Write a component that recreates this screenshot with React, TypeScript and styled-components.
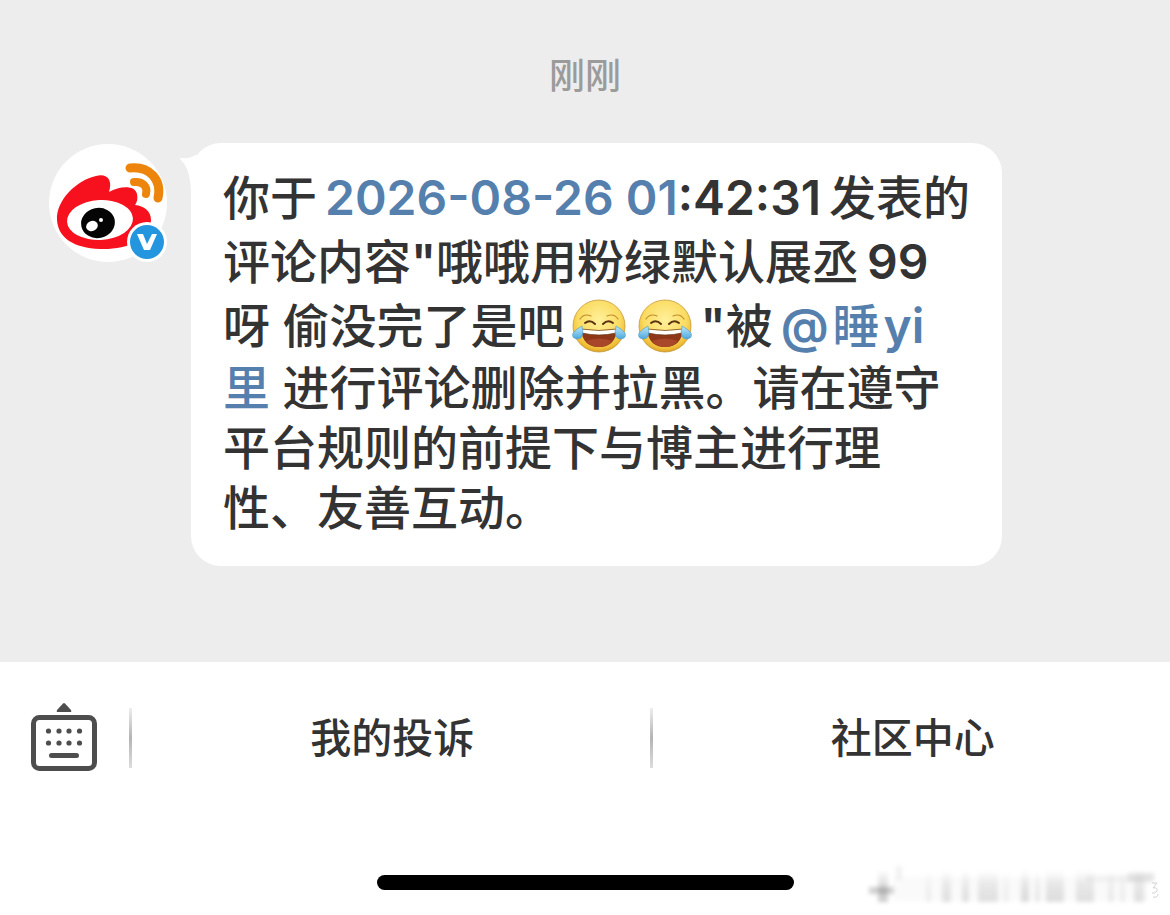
import React from "react";
import styled, { createGlobalStyle } from "styled-components";

const GlobalStyle = createGlobalStyle`
  *, *::before, *::after { box-sizing: border-box; }
  body {
    margin: 0;
    background: #fff;
    color: #333;
    font-family: Inter, "Noto Sans CJK SC", sans-serif;
  }
`;

const Page = styled.div`
  min-height: 100vh;
  display: flex;
  flex-direction: column;
`;

const Chat = styled.main`
  flex: 1;
  padding: 48px 168px 96px 49px;
  background: #ededed;
`;

const Timestamp = styled.time`
  display: block;
  margin: 0 -168px 39px -49px;
  text-align: center;
  font-size: 36px;
  font-weight: 500;
  line-height: 56px;
  color: #9b9b9b;
`;

const Message = styled.article`
  display: flex;
  align-items: flex-start;
  gap: 24px;
`;

const Avatar = styled.div`
  position: relative;
  flex: none;
  width: 118px;
  height: 118px;
  margin-top: 1px;
  border-radius: 50%;
  background: #fff;

  > svg {
    display: block;
  }
`;

const Badge = styled.svg`
  position: absolute;
  right: 0;
  bottom: 0;
`;

const Bubble = styled.div`
  position: relative;
  flex: 1;
  min-width: 0;
  padding: 23px 16px 28px 32px;
  border-radius: 30px;
  background: #fff;
`;

const Tail = styled.svg`
  position: absolute;
  left: -12px;
  top: 12px;
`;

const MessageText = styled.p`
  margin: 0;
  font-size: 47px;
  font-weight: 500;
  line-height: 60px;
`;

const Latin = styled.span<{ $before?: number; $after?: number }>`
  margin-left: ${(p) => p.$before ?? 0}px;
  margin-right: ${(p) => p.$after ?? 0}px;
  font-size: 48px;
  font-weight: 600;
  line-height: 64px;
`;

const TextLink = styled.a`
  color: #5580ad;
  text-decoration: none;
`;

const Emoji = styled.svg`
  width: 56px;
  height: 56px;
  margin: 0 4px 0 6px;
  vertical-align: -11px;
`;

const BottomPanel = styled.footer`
  padding: 46px 0 25px;
  background: #fff;
`;

const Menu = styled.nav`
  display: flex;
  height: 60px;
`;

const PlainButton = styled.button`
  padding: 0;
  border: 0;
  background: none;
  color: inherit;
  font-family: inherit;
  cursor: pointer;
`;

const KeyboardButton = styled(PlainButton)`
  flex: none;
  width: 129px;

  > svg {
    display: block;
    margin: -6px 0 0 30px;
  }
`;

const MenuButton = styled(PlainButton)`
  position: relative;
  flex: 1;
  padding-left: 6px;
  font-size: 41px;
  font-weight: 500;
  line-height: 60px;

  &::before {
    content: "";
    position: absolute;
    left: 0;
    top: 0;
    width: 3px;
    height: 60px;
    background: linear-gradient(#eee, #b4b4b4 50%, #ddd);
  }
`;

const Footer = styled.div`
  position: relative;
  display: flex;
  justify-content: center;
  padding-top: 107px;
`;

const HomeIndicator = styled.div`
  width: 36%;
  max-width: 417px;
  height: 15px;
  border-radius: 8px;
  background: #000;
`;

const Smudge = styled.svg`
  position: absolute;
  right: 4px;
  bottom: -16px;
`;

function JoyEmoji() {
  return (
    <Emoji viewBox="0 0 56 56" role="img" aria-label="笑cry">
      <defs>
        <radialGradient id="face" cx="50%" cy="38%" r="62%">
          <stop offset="0" stopColor="#fff09a" />
          <stop offset="0.65" stopColor="#fbdc62" />
          <stop offset="0.9" stopColor="#f0bd35" />
          <stop offset="1" stopColor="#d9a02b" />
        </radialGradient>
        <linearGradient id="tear" x1="0" y1="0" x2="0" y2="1">
          <stop offset="0" stopColor="#bce8fa" />
          <stop offset="1" stopColor="#4da7dc" />
        </linearGradient>
      </defs>
      <circle cx="28" cy="28" r="26" fill="url(#face)" stroke="#c79a3a" strokeWidth="0.8" />
      <path d="M9 21 Q13 15 20 18 M47 21 Q43 15 36 18" fill="none" stroke="#c08c2c" strokeWidth="1.2" strokeLinecap="round" />
      <path d="M14 25 Q19 21 24 26 M32 26 Q37 21 42 25" fill="none" stroke="#5c3510" strokeWidth="2" strokeLinecap="round" />
      <path d="M10 32 Q28 35 46 32 Q44 49 28 49 Q12 49 10 32Z" fill="#8f3719" />
      <path d="M10 31 Q28 34 46 31 L45 35 Q28 39 11 35Z" fill="#fff" stroke="#68320f" strokeWidth="0.7" />
      <path d="M15 43 Q28 38 41 43 Q36 49 28 49 Q20 49 15 43Z" fill="#a9472a" />
      <path d="M11 28 Q14 41 6 41 Q0 40 2 35 Q5 31 11 28Z M45 28 Q42 41 50 41 Q56 40 54 35 Q51 31 45 28Z" fill="url(#tear)" stroke="#499ac4" strokeWidth="0.6" />
    </Emoji>
  );
}

function WeiboLogo() {
  return (
    <svg width="118" height="118" viewBox="0 0 118 118" aria-hidden="true">
      <path
        d="M8 76 C7 56 28 36 47 32 C58 29 64 36 60 48 C71 42 86 41 88 50 C89 55 88 58 86 61 C95 62 102 67 102 76 C102 96 77 106 51 105 C25 104 9 94 8 76Z"
        fill="#f7101d"
      />
      <ellipse cx="51" cy="76" rx="33" ry="20" fill="#fff" transform="rotate(-3 51 76)" />
      <ellipse cx="49" cy="79" rx="17" ry="15" fill="#050505" transform="rotate(-12 49 79)" />
      <ellipse cx="43" cy="82" rx="6" ry="5" fill="#fff" transform="rotate(-25 43 82)" />
      <circle cx="52" cy="76" r="2" fill="#fff" />
      <path d="M81 24 C101 22 113 36 109 54" fill="none" stroke="#ed850c" strokeWidth="9" strokeLinecap="round" />
      <path d="M85 38 C94 37 99 43 97 50" fill="none" stroke="#ed850c" strokeWidth="8" strokeLinecap="round" />
    </svg>
  );
}

function KeyboardIcon() {
  return (
    <svg width="68" height="70" viewBox="0 0 68 70" aria-hidden="true">
      <path d="M27 8 L33 1.500 Q34 0.500 35 1.500 L41 8 Q42 10 40 10 H28 Q26 10 27 8Z" fill="#4d4d4d" />
      <rect x="3.500" y="15.500" width="61" height="51" rx="6" fill="none" stroke="#4d4d4d" strokeWidth="5" />
      {[29, 41].map((y) =>
        [18.5, 29, 39, 49.5].map((x) => <circle key={`${x}-${y}`} cx={x} cy={y} r="2.600" fill="#4d4d4d" />)
      )}
      <path d="M21.500 53.500 H46.500" stroke="#4d4d4d" strokeWidth="5" strokeLinecap="round" />
    </svg>
  );
}

const streaks = [
  [12, 10, 0.2], [60, 5, 0.06], [76, 9, 0.11], [96, 7, 0.11], [112, 20, 0.11], [137, 6, 0.05],
  [155, 8, 0.13], [169, 5, 0.08], [180, 18, 0.12], [210, 18, 0.11], [242, 6, 0.07], [254, 5, 0.06], [268, 10, 0.11],
];

function BlurredMark() {
  return (
    <Smudge width="300" height="44" viewBox="0 0 300 44" aria-hidden="true">
      <defs>
        <filter id="soft" x="-10%" y="-20%" width="120%" height="140%">
          <feGaussianBlur stdDeviation="2 2" />
        </filter>
        <linearGradient id="fade" x1="0" y1="0" x2="0" y2="1">
          <stop offset="0" stopColor="#000" stopOpacity="0" />
          <stop offset="0.5" stopColor="#000" stopOpacity="0.7" />
          <stop offset="1" stopColor="#000" />
        </linearGradient>
      </defs>
      <g filter="url(#soft)">
        {streaks.map(([x, w, o]) => (
          <rect key={x} x={x} y="8" width={w} height="32" fill="url(#fade)" opacity={o} />
        ))}
        <rect x="3" y="25" width="25" height="7" fill="#000" opacity="0.18" />
        <rect x="30" y="4" width="6" height="14" fill="#000" opacity="0.05" />
        <rect x="28" y="15" width="254" height="24" fill="#000" opacity="0.02" />
        <rect x="220" y="13" width="44" height="7" fill="#000" opacity="0.04" />
        <rect x="262" y="11" width="26" height="9" fill="#000" opacity="0.1" />
      </g>
      <path d="M286 21 h5 l-4 5 q5 -1 4 3 q-2 3 -5 2 M287 35 q5 1 5 -3" fill="none" stroke="#d2d2d2" strokeWidth="1" />
    </Smudge>
  );
}

export default function App() {
  return (
    <>
      <GlobalStyle />
      <Page>
        <Chat>
          <Timestamp>刚刚</Timestamp>
          <Message>
            <Avatar>
              <WeiboLogo />
              <Badge width="40" height="40" viewBox="0 0 40 40" role="img" aria-label="V">
                <circle cx="20" cy="20" r="20" fill="#fff" />
                <circle cx="20" cy="20" r="17" fill="#2496df" />
                <path d="M10 12 H16 L20 22 L25 12 H30 L23 28 H17Z" fill="#fff" />
              </Badge>
            </Avatar>
            <Bubble>
              <Tail width="30" height="40" viewBox="0 0 30 40" aria-hidden="true">
                <path d="M2 3 Q11 4 16 0 H30 V40 H12 Q12 15 2 5 Q0 3 2 3Z" fill="#fff" />
              </Tail>
              <MessageText>
                你于
                <Latin $before={8} $after={8}>
                  <TextLink href="#date">2026-08-26 01</TextLink>:42:31
                </Latin>
                发表的
                <br />
                评论内容<Latin>"</Latin>哦哦用粉绿默认展丞<Latin $before={8}>99</Latin>
                <br />
                呀 偷没完了是吧
                <JoyEmoji />
                <JoyEmoji />
                <Latin $before={4}>"</Latin>被
                <TextLink href="#user">
                  <Latin $before={8} $after={4}>@</Latin>睡<Latin $before={4}>yi</Latin>
                  <br />里
                </TextLink>{" "}
                进行评论删除并拉黑。请在遵守
                <br />
                平台规则的前提下与博主进行理
                <br />
                性、友善互动。
              </MessageText>
            </Bubble>
          </Message>
        </Chat>
        <BottomPanel>
          <Menu>
            <KeyboardButton type="button" aria-label="键盘">
              <KeyboardIcon />
            </KeyboardButton>
            <MenuButton type="button">我的投诉</MenuButton>
            <MenuButton type="button">社区中心</MenuButton>
          </Menu>
          <Footer>
            <HomeIndicator />
            <BlurredMark />
          </Footer>
        </BottomPanel>
      </Page>
    </>
  );
}
